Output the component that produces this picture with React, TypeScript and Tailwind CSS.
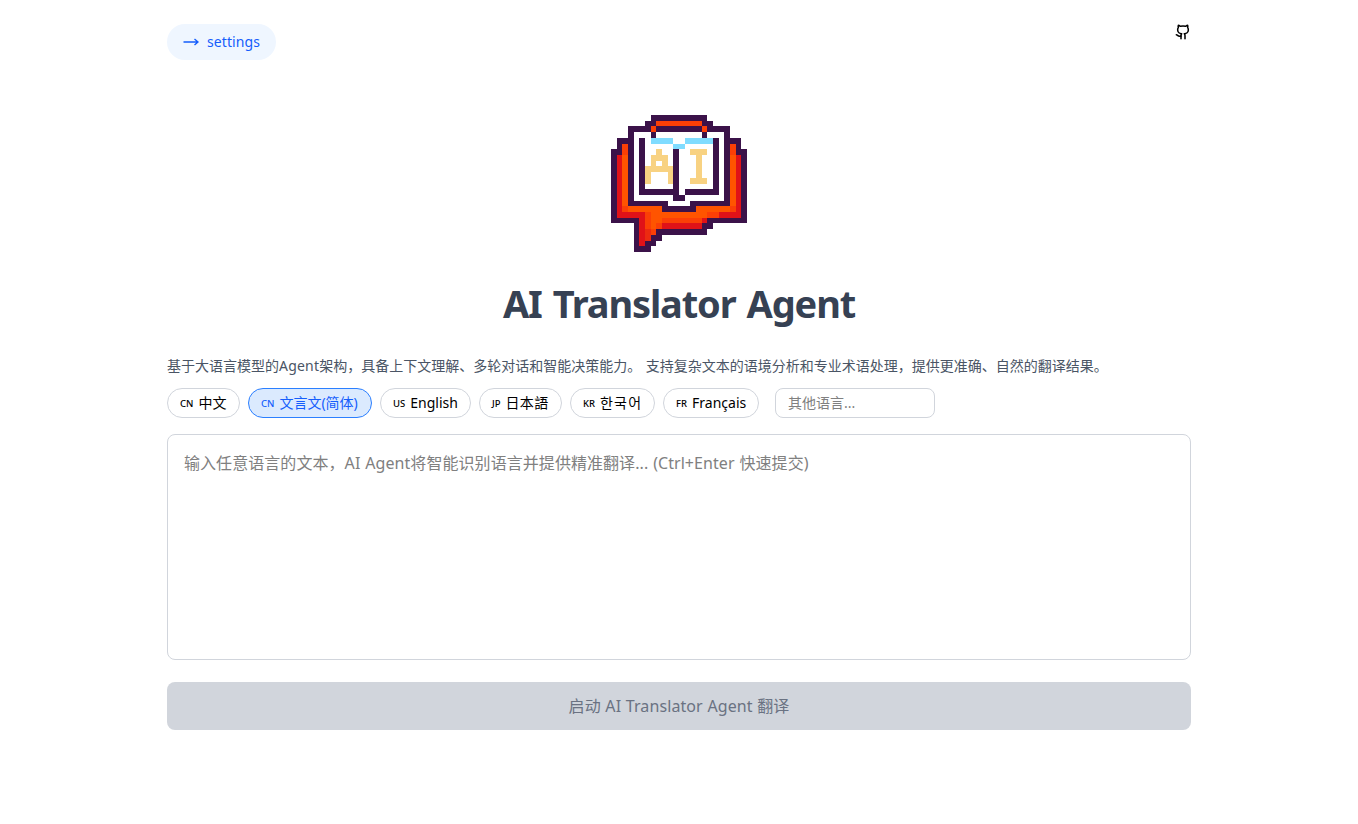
import React from 'react';

const PALETTE: Record<string, string> = {
  D: '#3b1249',
  O: '#ff5400',
  o: '#fb3f06',
  R: '#e01218',
  r: '#ec2a10',
  C: '#80dcff',
  Y: '#f8d282',
  W: '#ffffff',
};

const LOGO = [
  '.......DDDDDDDDDD.......',
  '......DDooooooooDD......',
  '...DDDDoDDDDDDDDoDDDD...',
  '...DWWWDWWWWWWWWDWWWD...',
  '.DDDWDWCCCCWWCCCCCDWDDD.',
  '.DoDWDWWWWWCCWWWWWDWDoD.',
  'DDoDWDWWYWWDWWYYYWDWDoDD',
  'DRODWDWYYYWDWWWYWWDWDORD',
  'DRODWDWYWYWDWWWYWWDWDORD',
  'DRODWDYYYYYDWWWYWWDWDORD',
  'DRODWDYWWWYDWWWYWWDWDORD',
  'DRODWDYWWWYDWWYYYWDWDORD',
  'DRODWDWWWWWDWWWWWWDWDORD',
  'DRODWDDDDDDDWDDDDDDWDORD',
  'DRODWWWWWWWDDWWWWWWWDORD',
  'DRODDDDDDDWWWWDDDDDDDORD',
  'DRoOOOOOODDDDDDOOOOOOoRD',
  'DRRRRRoOOOOOOOOOOooRRRRD',
  'DDDDDRoOOoooooooRDDDDDDD',
  '....DRoOoRRRRRRRDD......',
  '....DRroDDDDDDDDD.......',
  '....DRrDD...............',
  '....DRDD................',
  '....DDD.................',
];

function Logo() {
  return (
    <svg className="h-[137px] w-[136px]" viewBox="0 0 24 24" preserveAspectRatio="none" shapeRendering="crispEdges">
      {LOGO.flatMap((row, y) =>
        [...row].map((c, x) =>
          c === '.' ? null : <rect key={`${x}-${y}`} x={x} y={y} width={1} height={1} fill={PALETTE[c]} />,
        ),
      )}
    </svg>
  );
}

const LANGUAGES = [
  { code: 'CN', name: '中文', width: 'w-[73px]', tracking: '' },
  { code: 'CN', name: '文言文(简体)', width: 'w-[124px]', tracking: '', active: true },
  { code: 'US', name: 'English', width: 'w-[91px]', tracking: '' },
  { code: 'JP', name: '日本語', width: 'w-[83px]', tracking: 'tracking-[0.3px]' },
  { code: 'KR', name: '한국어', width: 'w-[85px]', tracking: 'tracking-[1.2px]' },
  { code: 'FR', name: 'Français', width: 'w-[96px]', tracking: '' },
];

export default function App() {
  return (
    <div className="min-h-screen bg-white pt-6 font-['Noto_Sans','Noto_Sans_CJK_SC','Noto_Sans_CJK_KR',sans-serif] text-black">
      <main className="mx-auto flex w-[1024px] flex-col">
        <header className="flex h-9 items-start justify-between">
          <button className="flex h-9 w-[109px] items-center gap-2 rounded-full bg-[#eff6ff] pl-4 text-sm text-[#155dfc]">
            <svg className="h-4 w-4 shrink-0" viewBox="0 0 16 16" fill="none" stroke="currentColor" strokeWidth="1.4">
              <path d="M0.5 8H15M11.500 5L15 8L11.500 11" />
            </svg>
            <span className="tracking-[0.1px] whitespace-nowrap">settings</span>
          </button>
          <svg className="h-4 w-4" viewBox="0 0 24 24" fill="none" stroke="currentColor" strokeWidth="2.3" strokeLinecap="round" strokeLinejoin="round">
            <path d="M15 22v-4a4.8 4.8 0 0 0-1-3.5c3 0 6-2 6-5.5.08-1.25-.27-2.48-1-3.5.28-1.15.28-2.35 0-3.5 0 0-1 0-3 1.500-2.64-.5-5.360-.5-8 0C6 2 5 2 5 2c-.3 1.150-.3 2.350 0 3.500A5.403 5.403 0 0 0 4 9c0 3.500 3 5.500 6 5.500-.39.49-.68 1.050-.85 1.650-.17.6-.22 1.230-.15 1.850v4" />
            <path d="M9 18c-4.510 2-5-2-7-2" />
          </svg>
        </header>
        <div className="mt-[55px] flex justify-center">
          <Logo />
        </div>
        <h1 className="mt-[31px] text-center text-[38px] leading-10 font-bold tracking-[-1.15px] [word-spacing:2.4px] whitespace-nowrap text-[#364153]">
          AI Translator Agent
        </h1>
        <p className="mt-[33px] h-5 text-sm leading-5 [word-spacing:1px] whitespace-nowrap text-[#4a5565]">
          基于大语言模型的<span className="tracking-[0.2px]">Agent</span>架构，具备上下文理解、多轮对话和智能决策能力。 支持复杂文本的语境分析和专业术语处理，提供更准确、自然的翻译结果。
        </p>
        <div className="mt-3 flex gap-2">
          {LANGUAGES.map((l) => (
            <button
              key={`${l.code}-${l.name}`}
              className={`flex h-[30px] items-center justify-start gap-[5px] rounded-full border pl-3 text-sm leading-5 whitespace-nowrap ${l.width} ${
                l.active ? 'border-[#2b7fff] bg-[#dbeafe] text-[#155dfc]' : 'border-[#d1d5dc] bg-white'
              }`}
            >
              <span className="pt-0.5 text-[9.5px] font-medium">{l.code}</span>
              <span className={l.tracking}>{l.name}</span>
            </button>
          ))}
          <input
            className="ml-2 h-[30px] w-40 rounded-lg border border-[#d1d5dc] px-3 pb-0.5 text-sm placeholder:text-[#808080]"
            placeholder="其他语言..."
          />
        </div>
        <textarea
          className="mt-4 h-[226px] w-full resize-none rounded-lg border border-[#d1d5dc] p-4 text-base leading-6 tracking-[0.06px] [word-spacing:0.7px] placeholder:text-[#808080]"
          placeholder="输入任意语言的文本，AI Agent将智能识别语言并提供精准翻译... (Ctrl+Enter 快速提交)"
        />
        <button className="mt-[22px] h-12 w-full rounded-lg bg-[#d1d5dc] text-base tracking-[0.1px] [word-spacing:0.3px] text-[#6a7282]">
          启动 AI Translator Agent 翻译
        </button>
      </main>
    </div>
  );
}
